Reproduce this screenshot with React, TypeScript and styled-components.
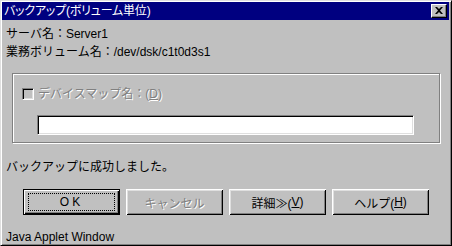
import React from 'react';
import styled, { createGlobalStyle } from 'styled-components';

const colors = {
  face: '#c0c0c0',
  light: '#dfdfdf',
  white: '#ffffff',
  shadow: '#808080',
  dark: '#000000',
  title: '#000080',
};

const font = `"Liberation Sans", "Noto Sans CJK JP", sans-serif`;

const GlobalStyle = createGlobalStyle`
  html, body {
    margin: 0;
    padding: 0;
    background: ${colors.face};
  }
  * {
    box-sizing: border-box;
  }
`;

export default function App() {
  return (
    <>
      <GlobalStyle />
      <Window>
        <TitleBar>
          <TitleText>バックアップ(ボリューム単位)</TitleText>
          <CloseButton aria-label="close">
            <svg width="8" height="7" viewBox="0 0 8 7">
              <path d="M0 0h2l2 2 2-2h2L5 3.5 8 7H6L4 5 2 7H0l3-3.5z" fill="#000" />
            </svg>
          </CloseButton>
        </TitleBar>
        <Body>
          <Line>サーバ名：Server1</Line>
          <Line>業務ボリューム名：/dev/dsk/c1t0d3s1</Line>
          <GroupBox>
            <CheckRow>
              <CheckBox />
              <DisabledLabel>
                デバイスマップ名：(<Mnemonic>D</Mnemonic>)
              </DisabledLabel>
            </CheckRow>
            <TextField />
          </GroupBox>
          <Message>バックアップに成功しました。</Message>
          <ButtonRow>
            <Button $default>OK</Button>
            <Button $disabled>キャンセル</Button>
            <Button>
              詳細≫(<Mnemonic>V</Mnemonic>)
            </Button>
            <Button>
              ヘルプ(<Mnemonic>H</Mnemonic>)
            </Button>
          </ButtonRow>
          <Footer>Java Applet Window</Footer>
        </Body>
      </Window>
    </>
  );
}

const Window = styled.div`
  width: 452px;
  height: 246px;
  background: ${colors.face};
  border-top: 1px solid ${colors.light};
  border-left: 1px solid ${colors.light};
  border-right: 1px solid ${colors.dark};
  border-bottom: 1px solid ${colors.dark};
  box-shadow: inset 1px 1px ${colors.white}, inset -1px -1px ${colors.shadow};
  padding: 1px 2px 1px 1px;
  display: flex;
  flex-direction: column;
  font-family: ${font};
  font-size: 12px;
  color: #000;
  overflow: hidden;
`;

const TitleBar = styled.div`
  height: 18px;
  background: ${colors.title};
  display: flex;
  align-items: center;
  justify-content: space-between;
  padding: 0 2px;
`;

const TitleText = styled.span`
  color: ${colors.white};
  font-size: 12px;
  line-height: 18px;
  font-feature-settings: "palt";
  letter-spacing: -0.2px;
`;

const CloseButton = styled.div`
  width: 16px;
  height: 14px;
  background: ${colors.face};
  border-top: 1px solid ${colors.white};
  border-left: 1px solid ${colors.white};
  border-right: 1px solid ${colors.dark};
  border-bottom: 1px solid ${colors.dark};
  box-shadow: inset -1px -1px ${colors.shadow};
  display: flex;
  align-items: center;
  justify-content: center;
  padding-bottom: 1px;
`;

const Body = styled.div`
  padding: 5px 0 0 4px;
  display: flex;
  flex-direction: column;
  align-items: flex-start;
`;

const Line = styled.div`
  line-height: 18px;
  height: 18px;
`;

const GroupBox = styled.div`
  margin: 12px 0 0 6px;
  width: 428px;
  height: 70px;
  border: 1px solid ${colors.shadow};
  box-shadow: inset 1px 1px ${colors.white}, 1px 1px ${colors.white};
  padding: 11px 0 0 9px;
  display: flex;
  flex-direction: column;
`;

const CheckRow = styled.div`
  display: flex;
  align-items: center;
  gap: 4px;
  height: 18px;
`;

const CheckBox = styled.span`
  width: 12px;
  height: 12px;
  border-top: 1px solid ${colors.shadow};
  border-left: 1px solid ${colors.shadow};
  border-right: 1px solid ${colors.white};
  border-bottom: 1px solid ${colors.white};
  box-shadow: inset 1px 1px ${colors.dark}, inset -1px -1px ${colors.light};
  background: ${colors.face};
`;

const DisabledLabel = styled.span`
  color: ${colors.shadow};
  text-shadow: 1px 1px ${colors.white};
  line-height: 18px;
`;

const Mnemonic = styled.span`
  text-decoration: underline;
`;

const TextField = styled.div`
  margin: 12px 0 0 15px;
  width: 377px;
  height: 20px;
  background: ${colors.white};
  border-top: 1px solid ${colors.shadow};
  border-left: 1px solid ${colors.shadow};
  border-right: 1px solid ${colors.white};
  border-bottom: 1px solid ${colors.white};
  box-shadow: inset 1px 1px ${colors.dark}, inset -1px -1px ${colors.light};
`;

const Message = styled.div`
  margin-top: 15px;
  line-height: 18px;
  height: 18px;
`;

const ButtonRow = styled.div`
  margin: 13px 0 0 17px;
  display: flex;
  gap: 6px;
`;

const Button = styled.div<{ $default?: boolean; $disabled?: boolean }>`
  position: relative;
  width: 97px;
  height: 26px;
  display: flex;
  align-items: center;
  justify-content: center;
  background: ${colors.face};
  color: ${(p) => (p.$disabled ? colors.shadow : '#000')};
  text-shadow: ${(p) => (p.$disabled ? `1px 1px ${colors.white}` : 'none')};
  letter-spacing: ${(p) => (p.$default ? '3px' : '0')};
  border: 1px solid ${(p) => (p.$default ? colors.dark : 'transparent')};
  box-shadow: ${(p) =>
    p.$default
      ? `inset 1px 1px ${colors.white}, inset -1px -1px ${colors.dark}, inset -2px -2px ${colors.shadow}`
      : `inset 1px 1px ${colors.white}, inset -1px -1px ${colors.dark}, inset 2px 2px ${colors.light}, inset -2px -2px ${colors.shadow}`};
  ${(p) =>
    p.$default
      ? `
    &::after {
      content: '';
      position: absolute;
      inset: 3px 4px;
      border: 1px dotted ${colors.dark};
    }
  `
      : ''}
  ${(p) => (p.$default ? '' : 'border: none;')}
`;

const Footer = styled.div`
  margin-top: 13px;
  line-height: 18px;
  height: 18px;
`;
